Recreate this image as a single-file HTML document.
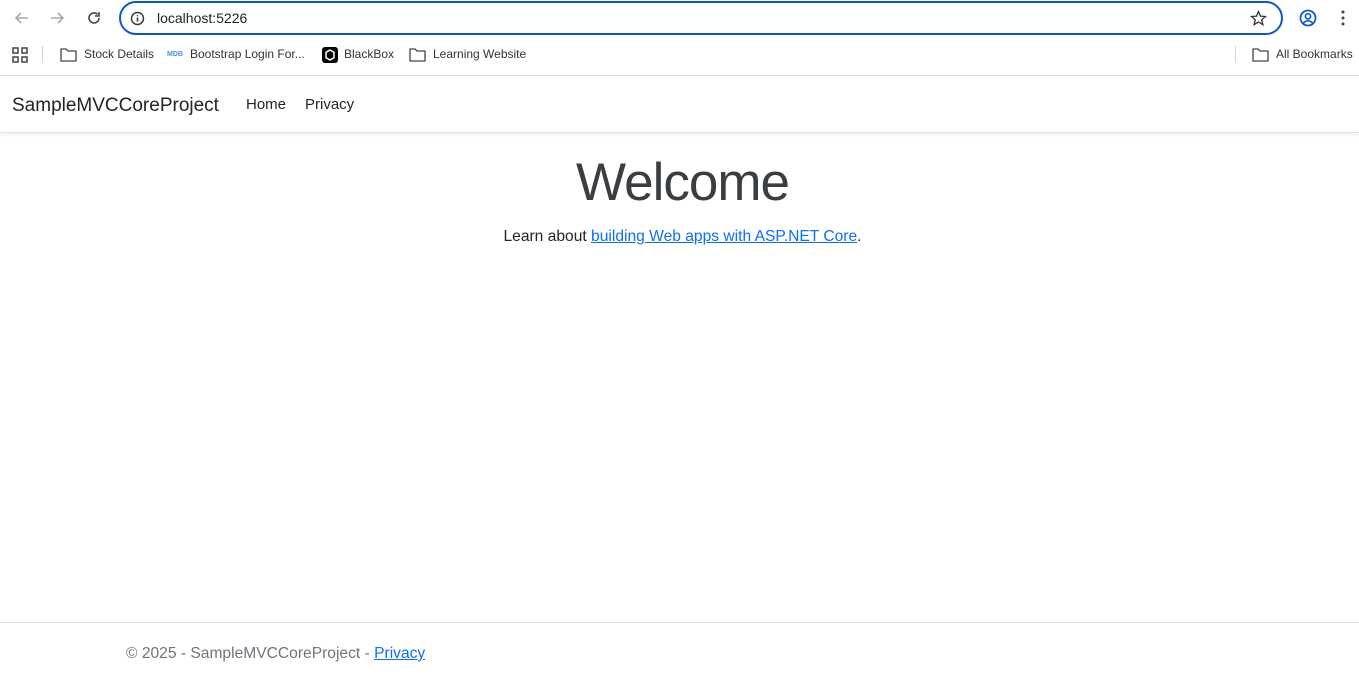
<!DOCTYPE html>
<html><head><meta charset="utf-8"><style>
*{margin:0;padding:0;box-sizing:border-box}
body{width:1359px;height:681px;overflow:hidden;background:#fff;font-family:"Liberation Sans",sans-serif;position:relative;color:#212529}
.chrome{position:absolute;left:0;top:0;width:1359px;height:76px;background:#fff;border-bottom:1px solid #dcdcdc}
.url{position:absolute;left:119px;top:1px;width:1164px;height:34px;border:2px solid #0b57d0;border-radius:17px}
.url span{position:absolute;left:36px;top:7px;font-size:14px;color:#1f1f1f}
.bm{position:absolute;top:47px;font-size:12px;color:#333}
.nav{position:absolute;top:76px;left:0;width:1359px;height:57px;border-bottom:1px solid #dee2e6;box-shadow:0 2px 4px rgba(0,0,0,.06)}
.brand{position:absolute;left:12px;top:19px;font-size:19px;color:#212529}
.nl{position:absolute;top:20px;font-size:15px;color:#212529}
h1{position:absolute;top:152px;left:3px;width:100%;text-align:center;font-size:53px;font-weight:300;color:#3a3d42;letter-spacing:-1px}
.p{position:absolute;top:228px;left:3px;width:100%;text-align:center;font-size:15.6px}
a{color:#0d6efd}
.foot{position:absolute;top:622px;left:0;width:1359px;border-top:1px solid #dee2e6}
.foot div{position:absolute;left:126px;top:22px;font-size:15.6px;color:#6c757d;white-space:nowrap}
</style></head><body>
<div class="chrome">
<svg style="position:absolute;left:13px;top:10px" width="18" height="16"><path d="M15 8H3M8 3L3 8l5 5" stroke="#aaa" stroke-width="1.6" fill="none"/></svg>
<svg style="position:absolute;left:49px;top:10px" width="18" height="16"><path d="M2 8h12M9 3l5 5-5 5" stroke="#aaa" stroke-width="1.6" fill="none"/></svg>
<svg style="position:absolute;left:86px;top:10px" width="16" height="16"><path d="M13 8a5 5 0 1 1-1.5-3.6M13 2v4H9" stroke="#444" stroke-width="1.6" fill="none"/></svg>
<div class="url"><svg style="position:absolute;left:9px;top:8px" width="15" height="15"><circle cx="7.5" cy="7.5" r="6" stroke="#333" stroke-width="1.4" fill="none"/><path d="M7.5 6.5v4M7.5 4.2v1" stroke="#333" stroke-width="1.6"/></svg><span>localhost:5226</span>
<svg style="position:absolute;right:14px;top:7px" width="17" height="17"><path d="M8.5 1.5l2 4.6 5 .4-3.8 3.3 1.2 4.9-4.4-2.7-4.4 2.7 1.2-4.9L1.5 6.5l5-.4z" stroke="#333" stroke-width="1.3" fill="none"/></svg></div>
<svg style="position:absolute;left:1299px;top:9px" width="18" height="18"><circle cx="9" cy="9" r="7.5" stroke="#0b57d0" stroke-width="1.8" fill="none"/><circle cx="9" cy="7.3" r="2.6" stroke="#0b57d0" stroke-width="1.6" fill="none"/><path d="M4.5 14c2.5-3 6.5-3 9 0" stroke="#0b57d0" stroke-width="1.6" fill="none"/></svg>
<svg style="position:absolute;left:1340px;top:10px" width="6" height="16"><circle cx="3" cy="2" r="1.5" fill="#444"/><circle cx="3" cy="8" r="1.5" fill="#444"/><circle cx="3" cy="14" r="1.5" fill="#444"/></svg>
<svg style="position:absolute;left:12px;top:47px" width="16" height="16"><g fill="none" stroke="#444" stroke-width="1.5"><rect x="1" y="1" width="5" height="5"/><rect x="10" y="1" width="5" height="5"/><rect x="1" y="10" width="5" height="5"/><rect x="10" y="10" width="5" height="5"/></g></svg>
<div style="position:absolute;left:42px;top:46px;width:1px;height:17px;background:#c8d8f0"></div>
<svg style="position:absolute;left:60px;top:48px" width="17" height="14"><path d="M1 1h5l2 2h8v10H1z" stroke="#444" stroke-width="1.3" fill="none"/></svg>
<div class="bm" style="left:84px">Stock Details</div>
<div style="position:absolute;left:167px;top:51px;font-size:7px;font-weight:bold;color:#4a90e2">MDB</div>
<div class="bm" style="left:190px">Bootstrap Login For...</div>
<div style="position:absolute;left:322px;top:47px;width:16px;height:16px;background:#000;border-radius:3px"><svg width="16" height="16"><path d="M8 3l4 2.3v5.4L8 13 4 10.7V5.3z" stroke="#fff" stroke-width="1.5" fill="none"/></svg></div>
<div class="bm" style="left:344px">BlackBox</div>
<svg style="position:absolute;left:409px;top:48px" width="17" height="14"><path d="M1 1h5l2 2h8v10H1z" stroke="#444" stroke-width="1.3" fill="none"/></svg>
<div class="bm" style="left:433px">Learning Website</div>
<div style="position:absolute;left:1235px;top:46px;width:1px;height:17px;background:#c8d8f0"></div>
<svg style="position:absolute;left:1252px;top:48px" width="17" height="14"><path d="M1 1h5l2 2h8v10H1z" stroke="#444" stroke-width="1.3" fill="none"/></svg>
<div class="bm" style="left:1276px">All Bookmarks</div>
</div>
<div class="nav"><div class="brand">SampleMVCCoreProject</div><div class="nl" style="left:246px">Home</div><div class="nl" style="left:305px">Privacy</div></div>
<h1>Welcome</h1>
<div class="p">Learn about <a href="#">building Web apps with ASP.NET Core</a>.</div>
<div class="foot"><div>© 2025 - SampleMVCCoreProject - <a href="#">Privacy</a></div></div>
</body></html>
